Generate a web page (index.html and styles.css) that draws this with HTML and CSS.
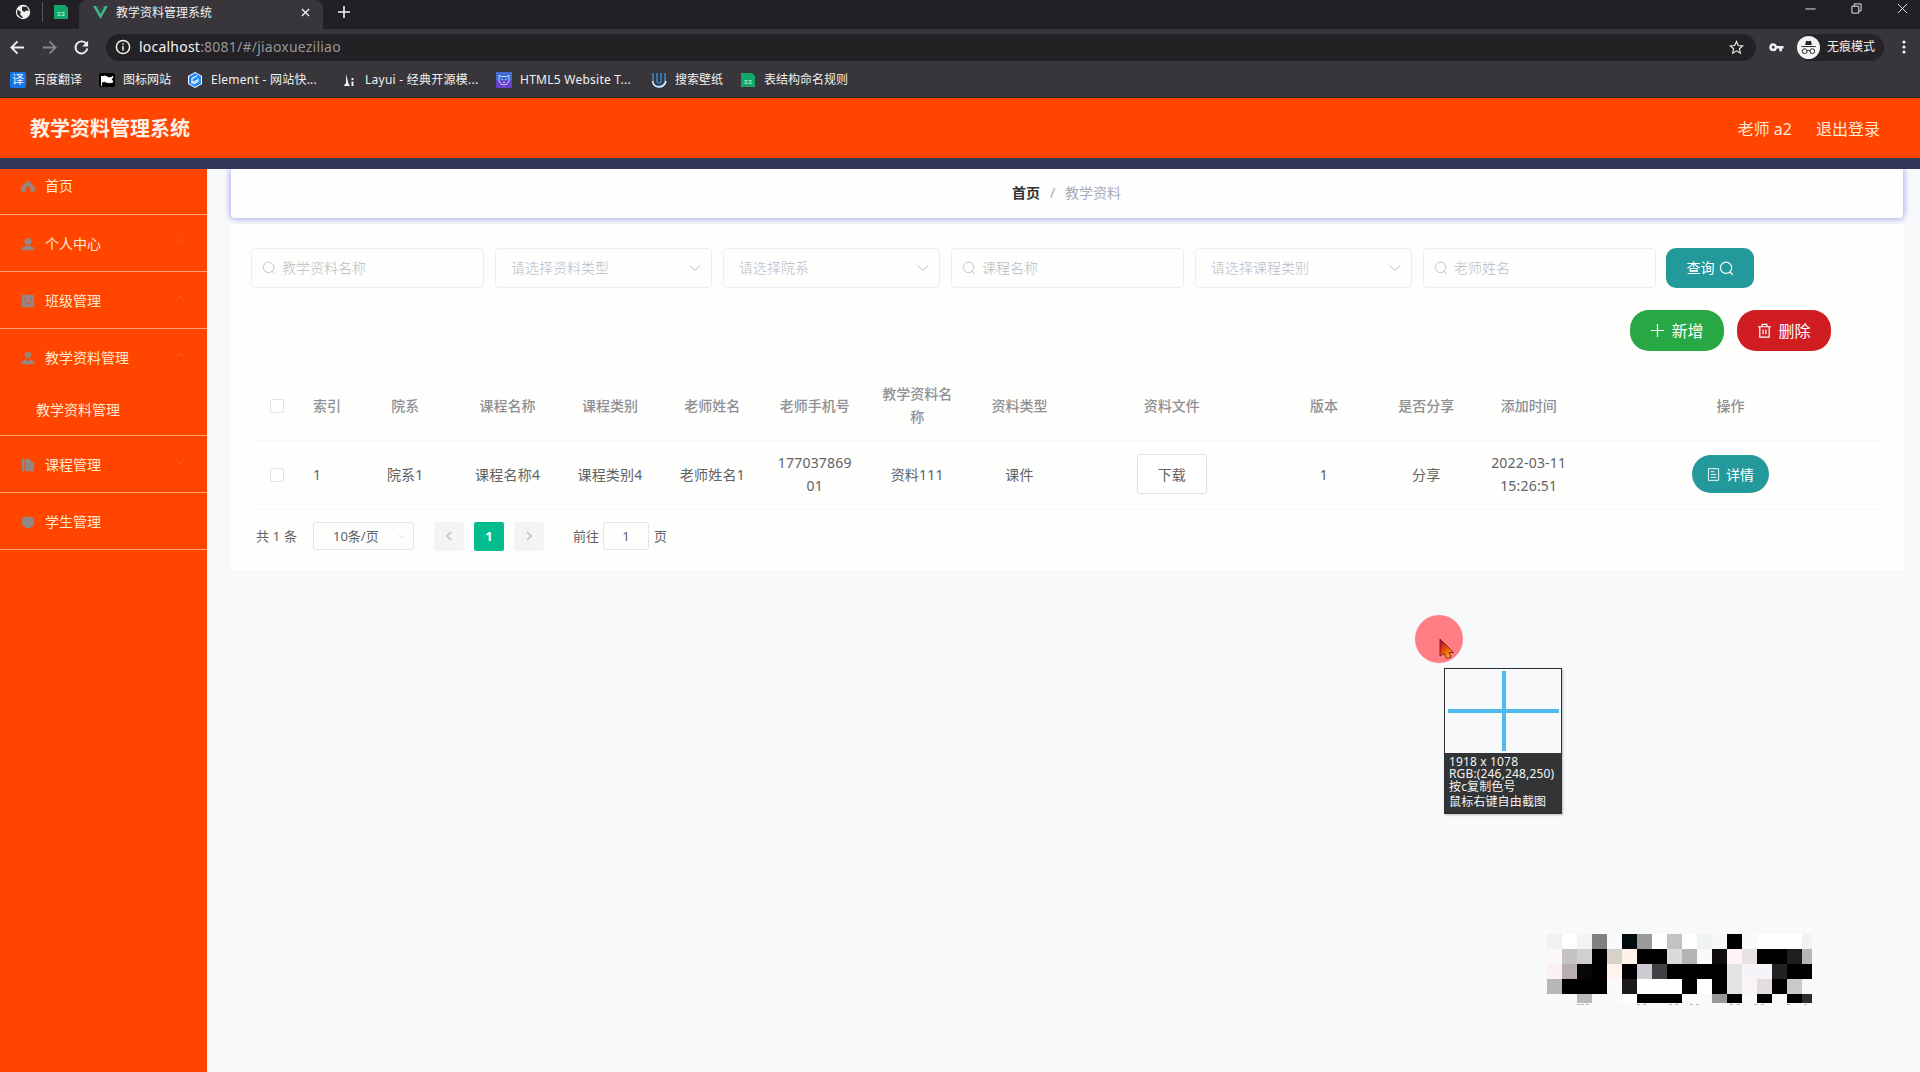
FILE: index.html
```html
<!DOCTYPE html>
<html lang="zh-CN">
<head>
<meta charset="utf-8">
<title>教学资料管理系统</title>
<link rel="stylesheet" href="styles.css">
</head>
<body>
<svg class="defs" width="0" height="0">
  <symbol id="search" viewBox="0 0 16 16"><circle cx="7.5" cy="7.3" r="6" /><path d="M11.6 11.8 14.6 14.6" /></symbol>
  <symbol id="down" viewBox="0 0 12 12"><path d="M1 3.5 6 8.5 11 3.5" /></symbol>
  <symbol id="up" viewBox="0 0 12 12"><path d="M1 8.5 6 3.5 11 8.5" /></symbol>
  <symbol id="sheet" viewBox="0 0 16 16"><path d="M1 1h11l3 3v11H1z" fill="#12a56c" stroke="none"/><path d="M4.5 8h3v1.6h-3zm4.2 0h3v1.6h-3zM4.5 10.600h3v1.400h-3zm4.200 0h3v1.400h-3z" fill="#8fe5bf" stroke="none"/></symbol>
</svg>

<header class="browser">
  <div class="tabs">
    <div class="pinned">
      <svg class="globe" viewBox="0 0 16 16"><circle cx="8" cy="8" r="7.200" fill="#f1f1f1"/><path d="M2.500 5.500 6 8l-1 2 3 3.500-2 .5-4-4zM7 2.500l5 .5 2 4-3-.500-1.500 1.500L7 6.500z" fill="#2a282c"/></svg>
      <i class="divider"></i>
      <svg class="s16"><use href="#sheet"/></svg>
    </div>
    <div class="tab">
      <svg class="vue" viewBox="0 0 16 14"><path d="M0 0h3.300L8 8.300 12.700 0H16L8 14z" fill="#41b883"/><path d="M3.300 0H6l2 3.500L10 0h2.700L8 8.300z" fill="#35495e"/></svg>
      <span class="tab-title">教学资料管理系统</span>
      <svg class="close" viewBox="0 0 10 10"><path d="M1 1 9 9M9 1 1 9"/></svg>
    </div>
    <svg class="plus" viewBox="0 0 12 12"><path d="M6 0v12M0 6h12"/></svg>
    <div class="window">
      <svg viewBox="0 0 12 12"><path d="M.5 6.500h11"/></svg>
      <svg viewBox="0 0 12 12"><path d="M1 3.500h7.500V11H1zM3.500 3.500V1H11v7.500H8.500"/></svg>
      <svg viewBox="0 0 12 12"><path d="M1 1 11 11M11 1 1 11"/></svg>
    </div>
  </div>
  <div class="toolbar">
    <svg class="nav" viewBox="0 0 16 16"><path d="M15 8H2M8 1.500 1.500 8 8 14.500"/></svg>
    <svg class="nav dim" viewBox="0 0 16 16"><path d="M1 8h13M8 1.500 14.500 8 8 14.500"/></svg>
    <svg class="nav" viewBox="0 0 16 16"><path d="M13.200 4.200A6.400 6.400 0 1 0 14.300 9"/><path d="M15 .8V7H8.800z" fill="#f1f1f1" stroke="none"/></svg>
    <div class="omnibox">
      <svg class="info" viewBox="0 0 16 16"><circle cx="8" cy="8" r="6.600"/><path d="M8 7v4.500M8 4.300v1.500"/></svg>
      <span class="url"><b>localhost</b>:8081/#/jiaoxueziliao</span>
      <svg class="star" viewBox="0 0 16 16"><path d="m8 1.500 1.900 4.300 4.700.5-3.500 3.100 1 4.600L8 11.600 3.900 14l1-4.600L1.400 6.300l4.700-.5z"/></svg>
    </div>
    <svg class="key" viewBox="0 0 16 11"><path fill-rule="evenodd" d="M4.500 1a4.200 4.200 0 1 0 4 5.500H11V9.500h2.800v-3h1.700v-2.700h-7A4.200 4.200 0 0 0 4.500 1zm0 2.700a1.500 1.500 0 1 1 0 3 1.500 1.500 0 0 1 0-3z"/></svg>
    <div class="incognito">
      <svg viewBox="0 0 24 24"><circle cx="12" cy="12" r="12" fill="#f4f4f5"/><path d="M8.500 9.500 9.500 5l2.500.6 2.500-.6 1 4.500z" fill="#252327"/><path d="M4.500 11h15M10.300 15.500q1.700-1 3.400 0" stroke="#252327" fill="none"/><circle cx="8" cy="15.800" r="2.500" fill="none" stroke="#252327"/><circle cx="16" cy="15.800" r="2.500" fill="none" stroke="#252327"/></svg>
      <span>无痕模式</span>
    </div>
    <svg class="dots" viewBox="0 0 4 14"><circle cx="2" cy="2" r="1.600"/><circle cx="2" cy="7" r="1.600"/><circle cx="2" cy="12" r="1.600"/></svg>
  </div>
  <nav class="bookmarks">
    <a class="bm w89"><span class="fanyi">译</span><span>百度翻译</span></a>
    <a class="bm w88"><svg viewBox="0 0 16 16"><rect y="1" width="16" height="14" rx="2" fill="#000"/><path d="M2.500 4v10M3 5q2.500-2 5 0t6-.5l-1.500 3 1.500 2.500q-3.500 1.500-6 .3T3 10z" fill="#fff" stroke="#fff"/></svg><span>图标网站</span></a>
    <a class="bm w154"><svg viewBox="0 0 16 16"><path d="M8 0l7 4v8l-7 4-7-4V4z" fill="#fff"/><path d="M8 1l6 3.500v7L8 15l-6-3.500v-7z" fill="#1989fa"/><path d="M5 6.500l5-2.800M5 6.500v4.500l5-2.800M6.500 12l4.500-2.500V6.500" stroke="#fff" stroke-width="1.200" fill="none"/></svg><span class="wider">Element - 网站快...</span></a>
    <a class="bm w155"><svg viewBox="0 0 16 16"><path d="M5 2l2.500 9.500L9 14H2.500L5 11zM10.500 6h2v2h-2zM10.500 9.500h2V14h-2z" fill="#eee"/></svg><span class="wider">Layui - 经典开源模...</span></a>
    <a class="bm w155"><svg viewBox="0 0 16 16"><path d="M0 0h16v8H0z" fill="#3f6bd0"/><path d="M0 8h16v8H0z" fill="#6741c8"/><path d="M3 3l2 1.500h6L13 3v6q-1 4-5 4T3 9zM5.500 7l1.500 1M10.500 7 9 8M7 10.500h2" stroke="#bad0ff" fill="none"/></svg><span class="wider">HTML5 Website T...</span></a>
    <a class="bm w89"><svg viewBox="0 0 16 16"><path d="M2 1v9q0 4 5 4t7-4V1M6 1v8q0 2 2 2t2-2V1" stroke="#3b83c5" stroke-width="1.600" fill="none"/><path d="M1.500 9q1 6 6.500 6t7-6" stroke="#e4f0ff" stroke-width="1.500" fill="none"/></svg><span>搜索壁纸</span></a>
    <a class="bm"><svg><use href="#sheet"/></svg><span>表结构命名规则</span></a>
  </nav>
</header>

<header class="app-head">
  <h1>教学资料管理系统</h1>
  <span>老师 a2</span><span class="logout">退出登录</span>
</header>

<div class="body">
  <aside class="side">
    <div class="item first"><svg viewBox="0 0 16 16"><path d="M8 1 15.500 9v6H11v-4L8 8l-3 3v4H.5V9z"/></svg><span>首页</span></div>
    <div class="item"><svg viewBox="0 0 16 16"><circle cx="8" cy="5" r="4"/><path d="M1 15v-3l5-2h4l5 2v3z"/></svg><span>个人中心</span><svg class="caret"><use href="#up"/></svg></div>
    <div class="item"><svg viewBox="0 0 16 16"><path d="M1 1h14v14H1z"/><path class="cut" d="M4 4v3M12 4v3M5 9q3 3 6 0"/></svg><span>班级管理</span><svg class="caret"><use href="#up"/></svg></div>
    <div class="group">
      <div class="item"><svg viewBox="0 0 16 16"><circle cx="8" cy="4.500" r="3.500"/><path d="M1 15v-3l4-3 3 3 3-3 4 3v3z"/></svg><span>教学资料管理</span><svg class="caret"><use href="#up"/></svg></div>
      <div class="sub">教学资料管理</div>
    </div>
    <div class="item"><svg viewBox="0 0 16 16"><path d="M1 1h3v14H1zM5 1h4l3 3 3 1v10H5z"/></svg><span>课程管理</span><svg class="caret"><use href="#down"/></svg></div>
    <div class="item"><svg viewBox="0 0 16 16"><rect x="1" y="2" width="14" height="11" rx="4"/><path d="M5 12h6v3H5z"/></svg><span>学生管理</span></div>
  </aside>

  <main class="main">
    <div class="crumbs"><b>首页</b><i>/</i><span>教学资料</span></div>
    <section class="card">
      <div class="filters">
        <div class="field"><svg class="ic"><use href="#search"/></svg><span>教学资料名称</span></div>
        <div class="field select"><span>请选择资料类型</span><svg class="dn"><use href="#down"/></svg></div>
        <div class="field select"><span>请选择院系</span><svg class="dn"><use href="#down"/></svg></div>
        <div class="field"><svg class="ic"><use href="#search"/></svg><span>课程名称</span></div>
        <div class="field select"><span>请选择课程类别</span><svg class="dn"><use href="#down"/></svg></div>
        <div class="field"><svg class="ic"><use href="#search"/></svg><span>老师姓名</span></div>
        <button class="btn query">查询<svg><use href="#search"/></svg></button>
      </div>
      <div class="actions">
        <button class="btn add"><svg viewBox="0 0 16 16"><path d="M8 1v14M1 8h14"/></svg>新增</button>
        <button class="btn del"><svg viewBox="0 0 16 16"><path d="M1 4h14M3 4v11h10V4M5.500 4V1.500h5V4M6.500 7v5M9.500 7v5"/></svg>删除</button>
      </div>
      <div class="table">
        <div class="row head">
          <div><i class="box"></i></div><div class="idx">索引</div><div>院系</div><div>课程名称</div><div>课程类别</div><div>老师姓名</div><div>老师手机号</div><div>教学资料名称</div><div>资料类型</div><div>资料文件</div><div>版本</div><div>是否分享</div><div>添加时间</div><div>操作</div>
        </div>
        <div class="row">
          <div><i class="box"></i></div><div class="idx">1</div><div>院系1</div><div>课程名称4</div><div>课程类别4</div><div>老师姓名1</div><div class="phone">17703786901</div><div>资料111</div><div>课件</div><div><button class="download">下载</button></div><div>1</div><div>分享</div><div>2022-03-11 15:26:51</div><div><button class="btn detail"><svg viewBox="0 0 14 14"><path d="M1.500.7h11v12.600h-11zM4 4h4M4 7h6M4 10h6"/></svg>详情</button></div>
        </div>
      </div>
      <div class="pager">
        <span class="total">共 1 条</span>
        <div class="size"><span>10条/页</span><svg><use href="#down"/></svg></div>
        <button class="pg"><svg viewBox="0 0 12 12"><path d="M8 2 4 6l4 4"/></svg></button>
        <button class="pg on">1</button>
        <button class="pg"><svg viewBox="0 0 12 12"><path d="M4 2l4 4-4 4"/></svg></button>
        <span class="goto">前往</span><span class="jump">1</span><span>页</span>
      </div>
    </section>
  </main>
</div>

<div class="halo"></div>
<svg class="pointer" viewBox="0 0 16 24"><defs><linearGradient id="g" x2=".6" y2="1"><stop offset="0" stop-color="#a00050"/><stop offset=".45" stop-color="#e63a10"/><stop offset="1" stop-color="#ffb000"/></linearGradient></defs><path d="M1 1v17l4-2.500 3 5 4-1.500-2-4.500h4.500z" fill="url(#g)" stroke="#842022"/></svg>
<div class="picker">
  <div class="lens"></div>
  <div class="readout"><p>1918 x 1078</p><p class="rgb">RGB:(246,248,250)</p><p>按c复制色号</p><p class="last">鼠标右键自由截图</p></div>
</div>
<svg class="mosaic" viewBox="0 0 265 72" id="mosaic"></svg>
<script src="mosaic.js"></script>
</body>
</html>
```
FILE: mosaic.js
```js
// One colour per 15px tile, row by row.
const tiles = [
  "f2f1f1 fff f4f2f3 807f82 fbfafa 000c0e 9b9a9b fff c3c3c4 fff eff3f3 f7f7f7 000 fafafc fff fff fff f2f2f2",
  "fdf8f8 c5c2c5 d2cfd1 000 d6d1c9 fff2e8 000 000 dbdadb b3b3b3 fafafc 100c0d fbf3f7 e9e2e3 000 000 201d1f b8b5b7",
  "fbf1f2 b8adb0 080506 000 fff3eb 000 cfccd1 424042 000 000 000 000 e2e4e4 f7f4f9 f7f4f9 242124 000 000",
  "b5b8b7 000 000 000 fbfafa 1c1b19 fff fff fff 000 fff 000 e2e4e4 f9f5f7 e2dddf 000 ccc9cb f8f8fa",
  "fafafc fafafc b8bbba fafafc fafafc fff 000 000 000 fafafc fafafc 9a999a 000 fafafc 000 fafafc 000 2c2c2e"
];
const svg = document.getElementById("mosaic");
const rect = (x, y, w, h, fill) => {
  const r = document.createElementNS("http://www.w3.org/2000/svg", "rect");
  Object.entries({ x, y, width: w, height: h, fill }).forEach(([k, v]) => r.setAttribute(k, v));
  svg.append(r);
};
tiles.forEach((line, row) => line.split(" ").forEach((c, col) =>
  rect(col * 15, row * 15, col === 17 ? 10 : 15, row === 4 ? 9 : 15, "#" + c)));
[30, 34, 39, 90, 96, 122, 128, 143, 149, 183, 190, 207, 214, 240, 257].forEach(x => rect(x, 70, 3, 1, "#b5b5b7"));
```
FILE: styles.css
```css
* { box-sizing: border-box; }
body { margin: 0; height: 1072px; overflow: hidden; background: #f8f9fb; font: 14px/20px "Noto Sans", "Noto Sans CJK SC", sans-serif; color: #606266; white-space: nowrap; position: relative; }
button { font: inherit; border: 0; padding: 0; margin: 0; }
svg { flex: none; fill: none; stroke: currentColor; overflow: visible; }
.defs { position: absolute; }
i { font-style: normal; }

.browser { height: 98px; background: #38363a; color: #f1f1f1; font-size: 12px; line-height: 16px; border-bottom: 1px solid #29262a; }
.tabs { height: 29px; background: #222025; display: flex; align-items: flex-start; }
.pinned { width: 79px; height: 29px; display: flex; align-items: center; padding: 0 0 5px 15px; }
.globe { width: 16px; height: 16px; stroke: none; }
.divider { width: 1px; height: 20px; background: #55535a; margin: 0 10px 0 11px; }
.s16 { width: 16px; height: 16px; }
.tab { width: 244px; height: 29px; background: #38363b; border-radius: 8px 8px 0 0; display: flex; align-items: center; padding: 0 13px 4px 14px; }
.vue { width: 15px; height: 13px; stroke: none; }
.tab-title { margin-left: 8px; }
.close { width: 9px; height: 9px; margin-left: auto; stroke-width: 1.500; }
.plus { width: 12px; height: 12px; margin: 6px 0 0 15px; stroke-width: 1.600; }
.window { display: flex; gap: 35px; margin: 3px 12px 0 auto; }
.window svg { width: 11px; height: 11px; }
.toolbar { height: 36px; display: flex; align-items: center; padding-left: 10px; }
.nav { width: 15px; height: 15px; stroke-width: 2; margin-right: 17px; }
.dim { color: #858388; }
.omnibox { width: 1650px; height: 27px; border-radius: 14px; background: #242124; display: flex; align-items: center; padding: 0 12px 0 9px; }
.info { width: 16px; height: 16px; stroke-width: 1.500; }
.url { margin-left: 8px; font-size: 14px; letter-spacing: .22px; color: #97959a; width: 215px; }
.url b { font-weight: 400; color: #f4f4f4; }
.star { width: 15px; height: 15px; margin-left: auto; stroke-width: 1.200; }
.key { width: 15px; height: 11px; margin-left: 13px; fill: #f1f1f1; stroke: none; }
.incognito { width: 87px; height: 27px; border-radius: 14px; background: #252327; margin-left: 13px; display: flex; align-items: center; gap: 7px; }
.incognito svg { width: 23px; height: 23px; stroke: none; }
.dots { width: 4px; height: 14px; fill: #f1f1f1; stroke: none; margin-left: 18px; }
.bookmarks { display: flex; height: 30px; align-items: center; padding-left: 10px; }
.bm { display: flex; align-items: center; gap: 8px; }
.bm svg { width: 16px; height: 16px; stroke: none; }
.wider { letter-spacing: .25px; }
.w88 { width: 88px; } .w89 { width: 89px; } .w154 { width: 154px; } .w155 { width: 155px; }
.fanyi { width: 16px; height: 16px; background: #1676e8; border-radius: 2px; text-align: center; font-size: 12px; line-height: 15px; }

.app-head { height: 71px; background: #ff4500; border-bottom: 11px solid #35375a; color: #ffe9d6; display: flex; align-items: center; padding: 2px 40px 0 30px; font-size: 16px; }
.app-head h1 { font-size: 20px; line-height: 28px; margin: 0 auto 0 0; color: #fff1e6; font-weight: 700; }
.app-head span { margin-bottom: 1px; }
.app-head .logout { margin-left: 24px; }

.body { display: flex; height: 903px; }
.side { width: 207px; background: #ff4500; color: #ffe9d0; }
.item { height: 57px; display: flex; align-items: center; padding: 2px 23px 0 21px; border-bottom: 1px solid #ffa078; }
.item.first { height: 46px; padding: 0 23px 11px 21px; }
.item svg { width: 14px; height: 14px; fill: #928784; stroke: none; margin-right: 10px; }
.item .cut { stroke: #c8622f; fill: none; stroke-width: 1.500; }
.item .caret { width: 8px; height: 8px; fill: none; stroke: #ed7a4e; margin: -6px 0 0 auto; }
.group { height: 107px; border-bottom: 1px solid #ffa078; }
.group .item { border: 0; padding-top: 0; }
.sub { padding: 14px 0 0 36px; line-height: 20px; }

.main { flex: 1; padding: 0 17px 0 24px; overflow: hidden; }
.crumbs { height: 49px; background: #fefefe; border-radius: 0 0 4px 4px; box-shadow: 0 0 6px 1px #a6a5ed; display: flex; justify-content: center; color: #a9abb8; padding: 14px 1px 0 0; position: relative; }
.crumbs b { color: #303133; } .crumbs i { margin: 0 10px; }
.card { margin: 6px -1px 0 0; height: 346px; padding: 24px 0 0 20px; background: #fefefd; }
.filters { display: flex; gap: 11px; height: 40px; }
.field { width: 233px; height: 40px; border: 1px solid #eceff0; border-radius: 4px; display: flex; align-items: center; padding: 0 11px 0 10px; color: #b9bbc5; font-weight: 300; }
.select { width: 217px; padding: 0 10px 0 15px; }
.ic { width: 14px; height: 14px; margin-right: 6px; }
.dn { width: 12px; height: 12px; margin-left: auto; }
.btn { color: #fff; display: flex; align-items: center; justify-content: center; }
.query { width: 88px; margin-left: -1px; border-radius: 10px; background: #23999b; gap: 4px; }
.query svg { width: 15px; height: 15px; stroke-width: 1.300; }
.actions { display: flex; justify-content: flex-end; gap: 13px; padding: 22px 73px 0 0; }
.add, .del { width: 94px; height: 41px; border-radius: 19px; background: #28a745; font-size: 16px; gap: 6px; }
.del { background: #cf1d22; }
.add svg, .del svg { width: 15px; height: 15px; stroke-width: 1.300; }
.table { margin-top: 19px; width: 1630px; }
.row { display: grid; grid-template-columns: 51px 52px repeat(7, 102.400px) 202px repeat(3, 102.400px) 301px; height: 69px; padding-bottom: 2px; align-items: center; text-align: center; line-height: 23px; border-bottom: 1px solid #f7f7f9; }
.row > div { padding: 0 10px; white-space: normal; word-break: break-all; letter-spacing: .2px; }
.row > .phone { padding: 0 13px; }
.row > .idx { text-align: left; padding-left: 11px; }
.row.head { height: 71px; padding: 0; color: #8f9095; font-weight: 500; }
.row.head > div { letter-spacing: 0; }
.box { display: inline-block; width: 14px; height: 14px; border: 1px solid #dfe1e8; border-radius: 2px; vertical-align: -2px; background: #fff; }
.download { width: 70px; height: 40px; background: #fff; border: 1px solid #dce2e2; border-radius: 3px; color: #606266; vertical-align: middle; }
.detail { width: 77px; height: 38px; border-radius: 19px; background: #23999b; margin: 0 auto; gap: 6px; }
.detail svg { width: 13px; height: 13px; }
.pager { display: flex; align-items: center; padding: 11px 0 0 5px; font-size: 13px; height: 41px; }
.total { width: 57px; letter-spacing: .2px; }
.size { width: 101px; height: 28px; border: 1px solid #e3e4e8; border-radius: 3px; display: flex; align-items: center; padding: 0 8px 0 19px; margin-right: 20px; }
.size svg { width: 7px; height: 7px; margin-left: auto; color: #c0c4cc; }
.pg { width: 30px; height: 29px; background: #f4f4f6; border-radius: 2px; margin-right: 10px; display: flex; align-items: center; justify-content: center; color: #bcbcc4; }
.pg svg { width: 12px; height: 12px; stroke-width: 1.500; }
.pg.on { background: #04bd8f; color: #fff; font-weight: 700; }
.goto { margin-left: 19px; }
.jump { width: 46px; height: 28px; border: 1px solid #e3e4e8; border-radius: 3px; text-align: center; line-height: 26px; margin: 0 5px 0 4px; }

.halo { position: absolute; left: 1415px; top: 615px; width: 48px; height: 48px; border-radius: 50%; background: #ff7e84; }
.pointer { position: absolute; left: 1439px; top: 638px; width: 16px; height: 24px; }
.picker { position: absolute; left: 1444px; top: 668px; width: 118px; height: 146px; border: 1px solid #303030; background: #333436; color: #f4f4f4; box-shadow: 1px 1px 2px #8888; }
.lens { height: 84px; background: linear-gradient(#4fbbee, #4fbbee) 57px 2px / 4px 80px no-repeat, linear-gradient(#4fbbee, #4fbbee) 3px 40px / 111px 4px no-repeat, #f8f9fb; }
.readout { padding: 3px 0 0 4px; font-size: 12px; line-height: 12px; letter-spacing: .15px; }
.readout p { margin: 0; }
.readout p + p + p { line-height: 14px; }
.readout .last { padding-top: 1px; }
.mosaic { position: absolute; left: 1547px; top: 934px; width: 265px; height: 72px; stroke: none; shape-rendering: crispEdges; }
```
